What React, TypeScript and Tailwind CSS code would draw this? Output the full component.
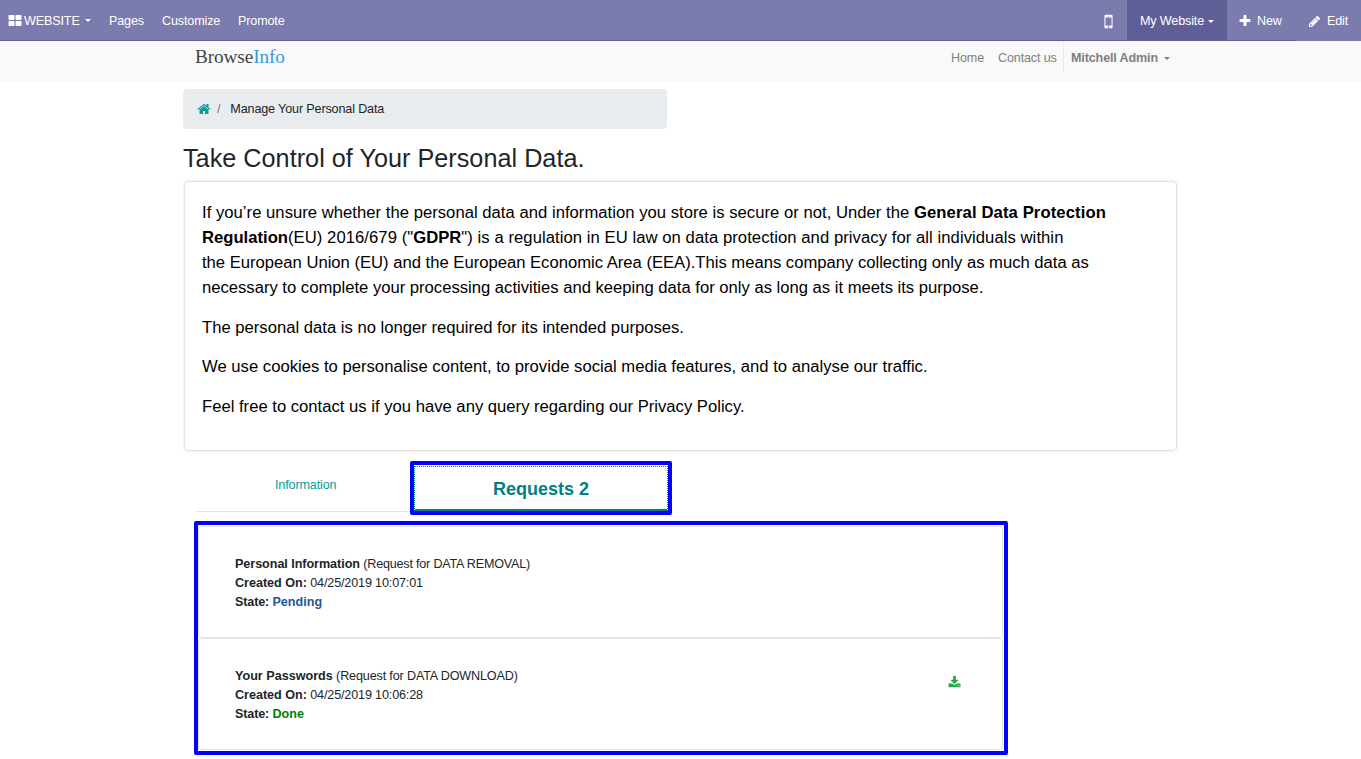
import type { ReactNode } from "react";

const icons = {
  thLarge:
    "M832 1024v384q0 52-38 90t-90 38h-512q-52 0-90-38t-38-90v-384q0-52 38-90t90-38h512q52 0 90 38t38 90zm0-768v384q0 52-38 90t-90 38h-512q-52 0-90-38t-38-90v-384q0-52 38-90t90-38h512q52 0 90 38t38 90zm896 768v384q0 52-38 90t-90 38h-512q-52 0-90-38t-38-90v-384q0-52 38-90t90-38h512q52 0 90 38t38 90zm0-768v384q0 52-38 90t-90 38h-512q-52 0-90-38t-38-90v-384q0-52 38-90t90-38h512q52 0 90 38t38 90z",
  home: "M1472 992v480q0 26-19 45t-45 19h-384v-384h-256v384h-384q-26 0-45-19t-19-45v-480q0-1 .5-3t.5-3l575-474 575 474q1 2 1 6zm223-69l-62 74q-8 9-21 11h-3q-13 0-21-7l-692-577-692 577q-12 8-24 7-13-2-21-11l-62-74q-8-10-7-23.5t11-21.5l719-599q32-26 76-26t76 26l244 204v-195q0-14 9-23t23-9h192q14 0 23 9t9 23v408l219 182q10 8 11 21.5t-7 23.5z",
  plus: "M1600 736v192q0 40-28 68t-68 28h-416v416q0 40-28 68t-68 28h-192q-40 0-68-28t-28-68v-416h-416q-40 0-68-28t-28-68v-192q0-40 28-68t68-28h416v-416q0-40 28-68t68-28h192q40 0 68 28t28 68v416h416q40 0 68 28t28 68z",
  pencil:
    "M491 1536l91-91-235-235-91 91v107h128v128h107zm523-928q0-22-22-22-10 0-17 7l-542 542q-7 7-7 17 0 22 22 22 10 0 17-7l542-542q7-7 7-17zm-54-192l416 416-832 832h-416v-416zm683 96q0 53-37 90l-166 166-416-416 166-165q36-38 90-38 53 0 91 38l235 234q37 39 37 91z",
  mobile:
    "M976 1408q0-33-23.5-56.5t-56.5-23.5-56.5 23.5-23.5 56.5 23.5 56.5 56.5 23.5 56.5-23.5 23.5-56.5zm208-160v-704q0-13-9.5-22.5t-22.5-9.5h-512q-13 0-22.5 9.5t-9.5 22.5v704q0 13 9.5 22.5t22.5 9.5h512q13 0 22.5-9.5t9.5-22.5zm-192-848q0-16-16-16h-160q-16 0-16 16t16 16h160q16 0 16-16zm288-16v1024q0 52-38 90t-90 38h-512q-52 0-90-38t-38-90v-1024q0-52 38-90t90-38h512q52 0 90 38t38 90z",
  download:
    "M1344 1344q0-26-19-45t-45-19-45 19-19 45 19 45 45 19 45-19 19-45zm256 0q0-26-19-45t-45-19-45 19-19 45 19 45 45 19 45-19 19-45zm128-224v320q0 40-28 68t-68 28h-1472q-40 0-68-28t-28-68v-320q0-40 28-68t68-28h465l135 136q58 56 136 56t136-56l136-136h464q40 0 68 28t28 68zm-325-569q17 41-14 70l-448 448q-18 19-45 19t-45-19l-448-448q-31-29-14-70 17-39 59-39h256v-448q0-26 19-45t45-19h256q26 0 45 19t19 45v448h256q42 0 59 39z",
};

function Icon({ name, className }: { name: keyof typeof icons; className: string }) {
  return (
    <svg viewBox="0 0 1792 1792" fill="currentColor" className={`shrink-0 ${className}`}>
      <path d={icons[name]} />
    </svg>
  );
}

function Caret({ className }: { className: string }) {
  return (
    <span
      className={`inline-block h-0 w-0 border-x-[3px] border-t-[3px] border-x-transparent border-t-current ${className}`}
    />
  );
}

function TopBar() {
  return (
    <header className="flex h-[41px] bg-[#7c7bad] text-white">
      <nav className="flex flex-1 items-center border-b border-[#5f5e97] pl-2 pt-[2px]">
        <Icon name="thLarge" className="mb-px h-[14px] w-[14px]" />
        <span className="ml-[2px] w-[56px]">WEBSITE</span>
        <Caret className="mb-px ml-[5px]" />
        <span className="ml-[18px] w-[53px]">Pages</span>
        <span className="w-[76px]">Customize</span>
        <span>Promote</span>
      </nav>
      <div className="flex w-[28px] items-center border-b border-[#5f5e97] pt-[2px]">
        <Icon name="mobile" className="h-[19px] w-[19px]" />
      </div>
      <div className="flex w-[100px] items-center bg-[#5f5e97] pl-[13px] pt-px">
        <span className="w-[65px]">My Website</span>
        <Caret className="ml-[3px]" />
      </div>
      <div className="flex w-[69px] items-center border-b border-[#5f5e97] pl-[11px] pt-[2px]">
        <Icon name="plus" className="mb-px h-[14px] w-[14px]" />
        <span className="ml-[5px]">New</span>
      </div>
      <div className="flex w-[65px] items-center pl-[12px] pt-px">
        <Icon name="pencil" className="h-[13px] w-[13px]" />
        <span className="ml-[6px]">Edit</span>
      </div>
    </header>
  );
}

function SiteHeader() {
  return (
    <div className="flex h-[41px] justify-between bg-[#f9f9f9] pl-[195px] text-[#808080]">
      <div className="pt-[5px] font-['Liberation_Serif',serif] text-[19.2px] leading-[22px] tracking-[-0.08px] text-[#444]">
        Browse<span className="text-[#3498db]">Info</span>
      </div>
      <nav className="flex h-[33px] w-[410px] items-center">
        <span className="w-[47px] pt-px">Home</span>
        <span className="w-[65px] pt-px">Contact us</span>
        <div className="flex h-full items-center border-l border-[#ebebeb] pl-[7px] pt-px">
          <b className="w-[87px]">Mitchell Admin</b>
          <Caret className="ml-[6px]" />
        </div>
      </nav>
    </div>
  );
}

function Policy() {
  return (
    <section className="ml-px mt-2 h-[270px] w-[993px] rounded-[4px] border border-[#e4e4e4] px-[17px] pt-[18px] text-[16.65px] leading-[25px] tracking-normal text-black shadow-[0_0_0_1px_#f3f3f3]">
      <p className="mb-[15px] whitespace-nowrap">
        <span className="tracking-[0.025px]">
          If you’re unsure whether the personal data and information you store is secure or not, Under the{" "}
        </span>
        <b className="tracking-[0.11px]">General Data Protection</b>
        <br />
        <b>Regulation</b>
        <span className="tracking-[0.06px]">
          (EU) 2016/679 ("<b className="tracking-normal">GDPR</b>") is a regulation in EU law on data protection and
          privacy for all individuals within
        </span>
        <br />
        <span className="tracking-[-0.01px]">
          the European Union (EU) and the European Economic Area (EEA).This means company collecting only as much data
          as
          <br />
          necessary to complete your processing activities and keeping data for only as long as it meets its purpose.
        </span>
      </p>
      <p className="mb-[14px]">The personal data is no longer required for its intended purposes.</p>
      <p className="mb-[15px] tracking-[0.01px]">
        We use cookies to personalise content, to provide social media features, and to analyse our traffic.
      </p>
      <p>Feel free to contact us if you have any query regarding our Privacy Policy.</p>
    </section>
  );
}

function RequestCard(props: { title: ReactNode; kind: ReactNode; created: string; state: ReactNode; action?: ReactNode }) {
  return (
    <article className="flex h-[112px] justify-between rounded-[4px] border-[1.5px] border-[#e4e4e4] pl-[36px] pr-[41px] pt-[28px]">
      <div>
        <p>
          {props.title} {props.kind}
        </p>
        <p>
          <b className="tracking-[-0.02px]">Created On:</b> {props.created}
        </p>
        <p>
          <b>State:</b> {props.state}
        </p>
      </div>
      {props.action}
    </article>
  );
}

export default function App() {
  return (
    <div className="h-[759px] w-[1361px] overflow-hidden bg-white font-['Liberation_Sans',Arial,sans-serif] text-[12.6px] leading-[19px] tracking-[-0.15px] text-[#212529]">
      <TopBar />
      <SiteHeader />
      <main className="pl-[183px]">
        <div className="mt-[7px] flex h-[40px] w-[484px] items-center rounded-[4px] bg-[#e9ecef] pl-[14px]">
          <Icon name="home" className="mb-px h-[14px] w-[14px] text-[#00a09d]" />
          <span className="ml-[6px] text-[#6c757d]">/</span>
          <span className="ml-[10px]">Manage Your Personal Data</span>
        </div>
        <h1 className="mt-[14px] text-[25.2px] leading-[30px] tracking-[0.03px]">Take Control of Your Personal Data.</h1>
        <Policy />

        <div className="mt-[10px] flex h-[54px] pl-[14px]">
          <div className="h-[51px] w-[213px] border-b border-[#dee2e6] pl-[78px] pt-[15px] text-[#00a09d]">
            Information
          </div>
          <div className="w-[262px] rounded-[2px] border-4 border-[#0000ff] pt-px">
            <div className="flex h-full justify-center border border-b-0 border-dotted border-[#008080]">
              <div className="w-full border-b-2 border-[#008080] pt-[12px] text-center text-[18px] font-bold leading-[20px] tracking-normal text-[#008080]">
                Requests 2
              </div>
            </div>
          </div>
        </div>

        <div className="ml-[11px] mt-[6px] h-[234px] w-[814px] rounded-[2px] border-4 border-[#0000ff] pr-[1px] pt-[1px]">
          <RequestCard
            title={<b className="tracking-[-0.05px]">Personal Information</b>}
            kind={<span className="tracking-[-0.21px]">(Request for DATA REMOVAL)</span>}
            created="04/25/2019 10:07:01"
            state={<b className="tracking-normal text-[#26539b]">Pending</b>}
          />
          <RequestCard
            title={<b className="tracking-normal">Your Passwords</b>}
            kind="(Request for DATA DOWNLOAD)"
            created="04/25/2019 10:06:28"
            state={<b className="tracking-normal text-[#008000]">Done</b>}
            action={<Icon name="download" className="mt-[9px] h-[13px] w-[13px] text-[#28a745]" />}
          />
        </div>
      </main>
    </div>
  );
}
